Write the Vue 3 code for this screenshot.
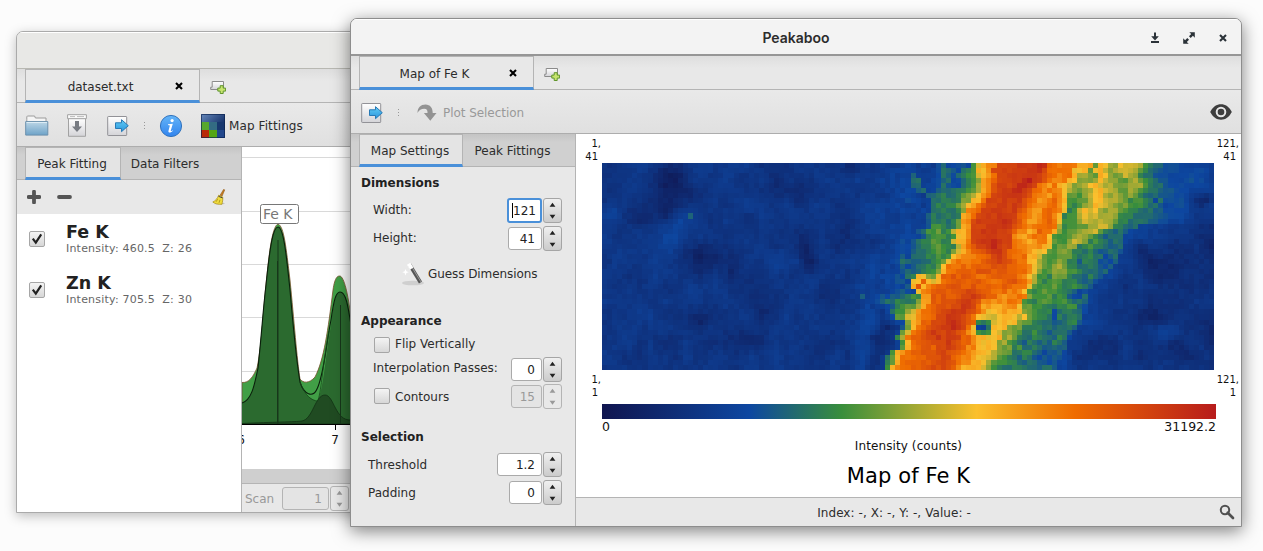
<script setup>
import { ref, onMounted } from 'vue'

const COLS = 121
const ROWS = 41

// Intensity profile of each row across the vein (a = 0, z = 1).
const vein = [
  'eeeeeeffefffgiggghgkoqsuwwxxxyyvutsttttqqrlqpnmpooonkjii',
  'eeeeeeefeeffgiihgijkqpsuwwxxxxywvttttttppqolpqomnooonljih',
  'eeeeeffiefffgihgijkkoqrtwxxxxyxwvutssttqpnnmlqpnmlmonmkjii',
  'eeeeeffiifffghiggijkmrsuwwxxyzxwvtsstqpnmmmnqommlkmnnlkji',
  'eeeefffiifffgihggijknrsvwwxyyxwvtsrttqpommnpqonnmlmnnkjii',
  'eeeefffghifghiiijjklnqsvwxxyyxwutstsspnmlmnpqonnmllnmkjiih',
  'eeeefffggfhiijiijlmnprtvwxwxxwvtssrtspllkmopqpnmnmlmljihih',
  'eeeeffgggfgiijjijmmqqtvwwxwwxvutrstusqkkllnpqonnmljkkjigi',
  'eeeefffggfgijijjlnqrtvwwxxwxwvtssstuspkjkmnqponmlmkkkjiih',
  'eeeeffffggiijiijmstuvwxxywwxvusrrtutspjjkoqopnmnnlkjjiiih',
  'eeeefffgghjiijijqrtwwxwxxxwwutsrstuusqjkknpoonnnmjjjiiiih',
  'eeeefffgghjijijlrswxwxxyyxwvtsrrstuttpkkkmonnonnljjiiiihg',
  'eeeefffgghkkjijlqrwwwxxxxxvutsstttustnjkkllnnoomjjihigggg',
  'eeeeefgghikkljkoqswwxxwwwwutssqrtuttqmkkllmnnoljihihggggf',
  'eeeeffgghjkkkjkpqsvwwxxwwvtsrqrstttspkkklmnmmljihiiiggggg',
  'eeeefgghijjlkjjoqtwxxyxwwutsrrqrsttqlkkkmonmjkkjihiifgggf',
  'eeefgghijjklkjjnrtvwxyxxwttsssrrrsqplkllnmmijkjjiihhigefe',
  'eeefgghiijklkjmoqsuvwxxwuttttsrqqppljkmmljjiijihhiihggeee',
  'effghgiiijjkjkprssttuwxwutttuuqqpolkkllljijjjiighigggeed',
  'eefgiihhiijklpstssttuvwxwvuttqrpnlklmmljjihjjijghghggfed',
  'eeffghghiijjlpttutuuuvvvuuuttspnlkkmnmljjihijighghgffedd',
  'eefgghihijjkmqttuuuvvvuvvuutuspmkklmmmkkjihiihigggfffeed',
  'feffghgijqpmlquuvuvvutuuvuuutspnkkjkmlljjiihjjihfgfffeedd',
  'feegghhgpuqoqtuuvuuuvutttuvutrnkjjkklkjjjjiihihgfeffeedde',
  'feeffgghqvqstuuvvvuuvuuutvuttpllkkkllkjjkjjihgggffgfeedd',
  'eefgghggpstuvuvvvwwvuuttusttspkjkkllkjkjjjiihgfghffeedddd',
  'efhghhijkjrvuvuvwwxwvuusrssttmkkkkkklkjjkjjihgggfigfeeddd',
  'efghiijjijmrvuvvvwxxwvssrsrttspkjjkllkjkkkjiihggffgggeedd',
  'eefghjkllnqtuvvvwwxxwvtqrqqrsspllkjkjjiijjkkihggfffggfedd',
  'eeefikkmorttuvwwwxxwvusppqrqqqmllkjjjjigijjjiihggffffeedd',
  'eeefgllopsttuvwwxxxwvtpoopqqpnpnlkkjjjiggjiijijihggffeedd',
  'eddefgmqruuvwwwxyxwvuspoopqpqnmllkjijiihghiijjihggfeedddd',
  'edcdehlqtuvwwwxxyxwvtsqrrqpqpmlmkjjijjiiihjiihihggfeeddd',
  'dddeeglotuvwxwwxwwvusqrqrqpommnlkjiijkiihhijiihhggfeddddd',
  'dccddejntuuvwwxwxxwuusqqppqnmnmljjiijkjihihijihgggfeedddd',
  'dcddefkqtuvvvwwwxwvuusrqpqpmmnkjjiihjiihhihjjiihggfeedddd',
  'dddeglqtuvvvuwwxwvuustqpqpmllmljkjiijiihghiihhgfgfedddddd',
  'ddekqrtuuvvvwwwvvutssrqqponmlljiijijihighhihgggffedddddd',
  'deilqtttuuvvwvwwutssqrpponklkjiihjiihghighhggffeeddddddd',
  'dejlqtuuuvuvwwvvutssqqppnlkkjjjihiiihhighgggffeedddddded',
  'dekqstttuuvvwwvwvutsqqqpqomkjjiijjiihihiihggffeeeddddded',
]

// Column where each row turns yellow, peaks, leaves yellow, and fades to blue.
const left = [75, 74, 75, 75, 75, 75, 74, 73, 72.5, 71.7, 71, 71, 71, 70.5, 70, 70.5, 71, 70.7, 69, 68, 67.3, 67, 62, 61.5, 61.5, 62, 63.5, 63.5, 63, 62.3, 61.3, 61, 61, 60.6, 60.3, 60, 60, 58.5, 58, 58, 57]
const peak = [84, 83.6, 83.3, 83, 82, 81, 80, 79.5, 79, 78.5, 78, 77.8, 77.5, 77.2, 77, 77.2, 77.4, 77.6, 78.2, 78.4, 77, 76, 74.5, 73.5, 72.5, 71.8, 71, 70.3, 69.7, 69, 68.5, 68, 67.5, 67, 66.7, 66.3, 66, 65.7, 65.5, 65.2, 65]
const right = [97, 96.3, 94.3, 93.5, 92.5, 92, 91.8, 91.7, 91.6, 91.5, 91.2, 91, 90.2, 89.6, 89, 88.6, 88.4, 87.6, 87, 86.3, 86, 85.6, 85.3, 85, 84.8, 84.3, 83.8, 83.4, 83, 82.7, 82.2, 81.6, 80.4, 79, 78.5, 78, 77.8, 77.4, 76.8, 76.3, 76]
const fade = [110.5, 110, 109, 110, 111, 111, 111, 110.6, 110.6, 110.5, 110.3, 109, 105.5, 103.5, 103, 102.7, 102.6, 102.5, 102, 101.5, 100.5, 100, 99, 97.3, 96.7, 96, 95.6, 95.4, 95.2, 95.2, 95, 95, 93.7, 93, 92.2, 92, 91.6, 91, 90.4, 90, 89.7]

const spots = {
  '17,10': 0.3, '51,26': 0.29, '61,2': 0.3, '61,3': 0.32,
  '74,31': 0.37, '75,31': 0.34, '76,31': 0.38,
  '74,32': 0.22, '75,32': 0.2, '76,32': 0.33,
  '74,33': 0.4, '75,33': 0.37, '76,33': 0.4, '73,32': 0.6,
}

const stops = [
  [0, 16, 21, 79], [0.24, 13, 71, 161], [0.39, 56, 142, 60],
  [0.61, 251, 192, 45], [0.77, 239, 108, 0], [1, 183, 28, 28],
]

// column, row, radius x, radius y, change in intensity
const blobs = [
  [13.5, 4, 3.5, 5, -0.09], [18.5, 18, 3, 2.6, -0.09], [27, 34, 3, 2.5, -0.07],
  [39.5, 17, 1.7, 3, -0.07], [41, 20, 1.5, 2, -0.06], [44, 25, 2, 3.5, -0.07],
  [34, 3, 1.5, 2.5, -0.06], [49, 0.5, 1.5, 1.5, -0.08], [56, 33, 2.5, 3, -0.08],
  [53.5, 15, 2, 2, -0.06], [12, 9, 1.5, 2, -0.06], [14, 35, 3, 1.5, -0.05],
  [19, 31, 1.5, 1.5, -0.07], [31, 29, 1.5, 1.8, -0.06], [54, 38, 2, 3, -0.07],
  [24, 16, 3, 6, -0.04], [47, 14, 3, 4, -0.04], [25, 22, 1, 2.5, -0.05],
  [30, 13, 2, 1.5, -0.05], [38.5, 5, 2, 3, -0.05], [8, 10, 3, 2, -0.05],
  [13, 15, 2, 4, 0.06], [15.5, 10, 2, 2, 0.05], [34, 20, 3, 3, 0.04],
  [51.5, 32, 2, 6, 0.06], [51, 38, 2, 3, 0.02], [55, 21, 2.5, 5, 0.06],
  [1.5, 9.5, 1.5, 1.5, 0.06], [57, 2, 3, 3, 0.03], [24, 3, 5, 6, 0.02],
  [9, 34, 0.7, 4, 0.03], [16, 36, 1, 2.5, 0.04], [37, 27, 2, 3, 0.02],
  [118.5, 7, 2.5, 1.2, -0.1], [106, 16.5, 2, 2, -0.07], [109, 20, 4, 4, -0.06], [110, 30, 3.5, 2, -0.06],
  [113, 37, 4, 2, -0.05], [120, 33, 2, 3, -0.05], [111, 33, 2, 1.6, 0.08],
  [114, 10, 1.5, 4, 0.04], [112, 3, 5, 4, 0.03], [118, 2, 4, 3, 0.04],
  [107, 14, 4, 1.5, 0.03], [119, 15, 2, 3, -0.04], [97, 36, 4, 3, -0.05],
]

function hash(x, y) {
  let h = Math.imul(x + 17, 374761393) ^ Math.imul(y + 31, 668265263)
  h = Math.imul(h ^ (h >>> 13), 1274126177)
  return ((h ^ (h >>> 16)) >>> 0) / 4294967295
}

function smooth(x, y) {
  const xi = Math.floor(x), yi = Math.floor(y)
  const fx = x - xi, fy = y - yi
  const top = hash(xi, yi) * (1 - fx) + hash(xi + 1, yi) * fx
  const low = hash(xi, yi + 1) * (1 - fx) + hash(xi + 1, yi + 1) * fx
  return top * (1 - fy) + low * fy
}

// Pairs of [column, profile index] that tie a row's profile to its columns.
const anchors = vein.map((s, r) => {
  const v = [...s].map(ch => ch.charCodeAt(0) - 97)
  const a = v.findIndex(n => n >= 15)
  const top = Math.max(...v)
  let sum = 0, weight = 0
  v.forEach((n, i) => { if (n >= top - 2) { sum += i; weight++ } })
  const m = sum / weight
  const b = v.findIndex((n, i) => i > m && n <= 13)
  let t = v.length - 1
  while (v[t] < 7) t--
  return [[left[r] - a, 0], [left[r], a], [peak[r], m], [right[r], b], [fade[r], t + 1]]
})

function background(c, r) {
  const fine = hash(c, r) - 0.5
  let v = 0.155 + (smooth(c / 2.4, r / 2.7) - 0.5) * 0.07 + fine * 0.035
  if (c > 60) v += r < 12 ? 0.02 : -0.015
  else if (c > 46) v += (c - 46) * 0.003
  for (const [bc, br, rx, ry, d] of blobs) {
    v += d * Math.exp(-(((c - bc) / rx) ** 2 + ((r - br) / ry) ** 2))
  }
  if (c >= fade[r] - 1) v += 0.07 * Math.exp(-(c - fade[r]) / 3.5)
  return Math.max(0.04, v)
}

function intensity(c, r) {
  const spot = spots[c + ',' + r]
  if (spot) return spot
  const ties = anchors[r]
  const base = background(c, r)
  if (c < ties[0][0] || c >= fade[r]) return base
  let k = 1
  while (k < ties.length - 1 && c > ties[k][0]) k++
  const [c0, i0] = ties[k - 1], [c1, i1] = ties[k]
  const i = Math.round(i0 + (i1 - i0) * (c - c0) / (c1 - c0))
  let v = (vein[r].charCodeAt(Math.min(i, vein[r].length - 1)) - 97) / 25
  // The upper part of the vein has a broad saturated core.
  if (r < 17 && c > left[r] + 2.5 && c < peak[r] + 3.5) v = Math.max(v, 0.89)
  return (v < 0.25 && c < 66 ? (v + base) / 2 + 0.01 : v) + (hash(c, r) - 0.5) * 0.03
}

function colour(v) {
  v = Math.min(1, Math.max(0, v))
  let i = 1
  while (i < stops.length - 1 && v > stops[i][0]) i++
  const a = stops[i - 1], b = stops[i]
  const t = (v - a[0]) / (b[0] - a[0])
  return [1, 2, 3].map(k => a[k] + (b[k] - a[k]) * t)
}

const map = ref(null)
onMounted(() => {
  const ctx = map.value.getContext('2d')
  const img = ctx.createImageData(COLS, ROWS)
  for (let r = 0; r < ROWS; r++) {
    for (let c = 0; c < COLS; c++) {
      img.data.set([...colour(intensity(c, r)), 255], (r * COLS + c) * 4)
    }
  }
  ctx.putImageData(img, 0, 0)
})

const fits = [
  { name: 'Fe K', info: 'Intensity: 460.5  Z: 26' },
  { name: 'Zn K', info: 'Intensity: 705.5  Z: 30' },
]
</script>

<template>
  <div class="desktop">
    <svg class="defs" width="0" height="0">
      <defs>
        <linearGradient id="paper" x2="0" y2="1"><stop offset="0" stop-color="#fff" /><stop offset="1" stop-color="#d4d4d8" /></linearGradient>
        <linearGradient id="blueArrow" x2="0" y2="1"><stop offset="0" stop-color="#62cdf6" /><stop offset="1" stop-color="#2b95dc" /></linearGradient>
        <linearGradient id="folder" x2="0" y2="1"><stop offset="0" stop-color="#bcd6e6" /><stop offset="1" stop-color="#6ea3c8" /></linearGradient>
        <linearGradient id="info" x2="0" y2="1"><stop offset="0" stop-color="#64b5f8" /><stop offset="1" stop-color="#3284ee" /></linearGradient>
        <linearGradient id="navy" x2="1" y2="1"><stop offset="0" stop-color="#6688bb" /><stop offset=".6" stop-color="#1d3a72" /><stop offset="1" stop-color="#0b1c46" /></linearGradient>
        <symbol id="newtab" viewBox="0 0 16 14">
          <path d="M2.2 1.5h11.3v8H.7V7.2h1.5z" fill="url(#paper)" stroke="#8b8b8b" />
          <path d="M10.2 5.7h3v2.4h2.4v3h-2.4v2.4h-3v-2.4H7.8v-3h2.4z" fill="#c7e46f" stroke="#5f942a" />
        </symbol>
        <symbol id="export" viewBox="0 0 22 22">
          <rect x=".7" y="1.5" width="19" height="19" rx=".6" fill="url(#paper)" stroke="#929297" />
          <path d="M8.5 7.8h6V4.7l6.8 6-6.8 6v-3.2h-6z" fill="url(#blueArrow)" stroke="#2779b5" />
        </symbol>
        <symbol id="close" viewBox="0 0 8 8"><path d="M1 1l6 6M7 1L1 7" stroke="currentColor" stroke-width="2.1" /></symbol>
        <symbol id="tick" viewBox="0 0 16 16"><path d="M3.8 7.7l3 3.9L12.2 3.4" fill="none" stroke="#222" stroke-width="2.2" /></symbol>
        <symbol id="arrows" viewBox="0 0 17 23"><path d="M5.6 7.8l2.9-4 2.9 4zM5.6 15.7l2.9 4 2.9-4z" fill="currentColor" /></symbol>
      </defs>
    </svg>

    <section class="window back">
      <header class="titlebar dim"></header>
      <div class="tabs main">
        <div class="tab active">dataset.txt<svg class="x"><use href="#close" /></svg></div>
        <svg class="new"><use href="#newtab" /></svg>
      </div>
      <div class="toolbar">
        <svg class="folder-ico" viewBox="0 0 24 22">
          <path d="M1.8 4.5V1.8l.6-.8h7.2l.8 2H21v4H1.8z" fill="#f5f5f5" stroke="#9c9c9c" />
          <path d="M.7 6.6h22.1v13.5H.7z" fill="url(#folder)" stroke="#6c91ad" /><path d="M1.5 7.5h20.5" stroke="#dcecf5" />
        </svg>
        <svg class="save-ico" viewBox="0 0 20 23">
          <path d="M1.5 4.5h17v17.8h-17z" fill="url(#paper)" stroke="#a2a2a2" /><path d="M.6.7h18.8v4H.6z" fill="#fafafa" stroke="#a2a2a2" /><path d="M3 2.6h5M10 2.6h7" stroke="#bbb" />
          <path d="M8 7h4v5.4h3L10 18l-5-5.6h3z" fill="#777b82" />
        </svg>
        <svg class="export-ico"><use href="#export" /></svg>
        <i class="grip"></i>
        <svg class="info-ico" viewBox="0 0 24 24"><circle cx="12" cy="12" r="10.6" fill="url(#info)" stroke="#3273bd" />
          <circle cx="13.1" cy="6.6" r="1.6" fill="#fff" /><path d="M9 10.2l4.8-.4-2 6.7c-.2 1 .6.7 1.8-.3l.3.5c-1.9 2.1-5.1 2.6-4.4 0l1.4-5.3-1.9-.4z" fill="#fff" /></svg>
        <svg class="map-ico" viewBox="0 0 24 24">
          <path d="M0 0h24v24H0z" fill="url(#navy)" /><path d="M0 8h8v8H0z" fill="#57a72c" /><path d="M8 8h8v8H8z" fill="#336b83" /><path d="M16 8h8v8h-8z" fill="#17376e" />
          <path d="M0 16h8v8H0z" fill="#b92907" /><path d="M8 16h8v8H8z" fill="#54a514" /><path d="M16 16h8v8h-8z" fill="#22478c" /><path d="M.5.5h23v23H.5z" fill="none" stroke="#09204c" stroke-opacity=".65" />
        </svg>
        <span class="wide">Map Fittings</span>
      </div>
      <div class="back-body">
        <aside class="fitlist">
          <div class="tabs side"><div class="tab active pf">Peak Fitting</div><div class="tab df">Data Filters</div></div>
          <div class="actions">
            <svg class="plus" viewBox="0 0 14 14"><path d="M7 1.6v10.8M1.6 7h10.8" stroke="#555" stroke-width="3.8" stroke-linecap="round" /></svg>
            <svg class="minus" viewBox="0 0 15 14"><path d="M2 7h11" stroke="#555" stroke-width="3.8" stroke-linecap="round" /></svg>
            <svg class="broom" viewBox="0 0 14 16">
              <path d="M2 15.4l11-.5-1.5-1.2z" fill="#999" opacity=".5" /><path d="M11.7.3l1 .6-2.6 6.2-2-.9z" fill="#c97b1c" stroke="#8d581a" stroke-width=".6" />
              <path d="M6.7 6.2l4 1.8c.3 2.8-.3 5-.7 7.3-3.4.2-7.3-.4-9.2-2.3 2.8-1.2 4.7-3.7 5.9-6.8z" fill="#f0dc3d" stroke="#a78b12" stroke-width=".7" /><path d="M4 12.8l1.7-2.7M7 13.8l1-3" stroke="#a58b17" stroke-width=".8" />
              <path d="M6.5 7.3l4 1.6" stroke="#444" />
            </svg>
          </div>
          <div v-for="f in fits" :key="f.name" class="fit">
            <span class="check"><svg><use href="#tick" /></svg></span>
            <div><b>{{ f.name }}</b><small>{{ f.info }}</small></div>
          </div>
        </aside>
        <div class="spectrum">
          <svg class="chart" width="109" height="322" viewBox="242 147 109 322">
            <path d="M242 157.5h109M242 211.5h109M242 264.5h109M242 317.5h109M242 371.5h109" stroke="#d9d9d9" />
            <path d="M242 382.5C249 383 253 377 257 368C262 345 263 310 267 275C270 245 273 226 278 224C284 226 286 247 290 280C294 320 297 360 300 379C303 383 309 384 315 377C324 360 328 330 333 290C335 276 338 276 340 276C344 277 348 293 351 318V424H242z" fill="#419f46" stroke="#78502d" stroke-width=".8" />
            <path d="M242 403C251 400 254 388 258 368C262 330 263 310 266 285C270 246 273 227 278 227C284 227 287 262 290 290C293 325 296 358 300 382C305 396 312 400 318 401C324 384 325 360 331 325C334 300 336 292 340 292C346 292 348 306 351 325V424H242z" fill="#2b6a2f" />
            <path d="M242 403C251 400 254 388 258 368C262 330 263 310 266 285C270 246 273 227 278 227C284 227 287 262 290 290C293 325 296 358 300 382C304 395 313 398 317 389C324 375 326 345 331 320C334 299 336 292 340 292C346 292 348 306 351 325" fill="none" stroke="#0b1f0c" stroke-width="1.1" />
            <path d="M300 382C305 396 312 401 318 401C322 386 322 370 329 331" fill="none" stroke="#174a1a" stroke-width=".8" />
            <path d="M242 423.5C273 422 295 422 302 421C313 419 315 395 325 395C334 395 335 421 351 420V424H242z" fill="#204b22" stroke="#143516" stroke-width=".9" />
            <path d="M278 240v184M340.5 305v119" stroke="#17361a" /><path d="M277.5 261v163" stroke="#17361a" />
            <path d="M242 424.5h109" stroke="#000" /><path d="M335.5 425v5" stroke="#000" />
            <text x="335" y="444" text-anchor="middle">7</text><text x="241" y="444" text-anchor="middle">6</text>
            <rect x="260.5" y="204.5" width="38" height="19" rx="2" fill="#fff" stroke="#777" /><text class="tag" x="263" y="219">Fe K</text>
          </svg>
          <div class="scroll"></div>
          <div class="scan"><span class="down">Scan</span><div class="spin off"><div class="field w47">1</div><svg class="step"><use href="#arrows" /></svg></div></div>
        </div>
      </div>
    </section>

    <section class="window front">
      <header class="titlebar"><span class="grow"></span><b>Peakaboo</b>
        <span class="grow winbtns">
          <svg viewBox="0 0 10 11"><path d="M5 .5v6M1 9.9h8" stroke="#2b3238" stroke-width="2" /><path d="M1.2 4.3h7.6L5 8.6z" fill="#2b3238" /></svg>
          <svg class="max" viewBox="0 0 12 12"><path d="M6.3.2h5.5v5.5L9.9 3.8 7.7 6 6 4.3l2.2-2.2zM5.7 11.8H.2V6.3l1.9 1.9L4.3 6 6 7.7 3.8 9.9z" fill="#2b3238" /></svg>
          <svg class="cls"><use href="#close" /></svg>
        </span>
      </header>
      <div class="tabs main">
        <div class="tab active">Map of Fe K<svg class="x"><use href="#close" /></svg></div>
        <svg class="new"><use href="#newtab" /></svg>
      </div>
      <div class="toolbar">
        <svg class="export-ico first"><use href="#export" /></svg>
        <i class="grip"></i>
        <svg class="plot-ico" viewBox="0 0 20 17"><path d="M.6 9C.2 3.5 4 .4 8.500.4c4.7 0 7.2 3.5 7.2 8.5h3.8l-6.2 7.8-6.4-7.8h3.6c.2-3-.8-4.2-3.3-4.2C4.3 4.7 2 6 .6 9z" fill="#939393" /></svg>
        <span class="disabled">Plot Selection</span>
        <svg class="eye" viewBox="0 0 22 16"><path d="M.2 8C3 2.7 6.6.3 11 .3S19 2.7 21.8 8C19 13.3 15.4 15.7 11 15.7S3 13.3.2 8z" fill="#3e3e3e" /><circle cx="11" cy="8" r="4.3" fill="none" stroke="#e6e6e6" stroke-width="2" /></svg>
      </div>
      <div class="front-body">
        <aside class="settings">
          <div class="tabs side"><div class="tab active ms">Map Settings</div><div class="tab pk">Peak Fittings</div></div>
          <div class="form">
            <h4 class="h27">Dimensions</h4>
            <div class="line in1"><span>Width:</span><div class="spin"><div class="field w35 focus">121</div><svg class="step"><use href="#arrows" /></svg></div></div>
            <div class="line in1"><span>Height:</span><div class="spin"><div class="field w34">41</div><svg class="step"><use href="#arrows" /></svg></div></div>
            <div class="guess">
              <svg viewBox="0 0 23 24"><ellipse cx="12" cy="21" rx="11" ry="2.3" fill="#aaa" opacity=".4" /><path d="M8.5 2.5L19.5 20.5" stroke="#555" stroke-width="3.6" /><path d="M9.1 2.2L20 20" stroke="#999" stroke-width="1" /><path d="M7.7 1.8l3 4.8" stroke="#fff" stroke-width="4" /><path d="M4.5 7l.9 2.3 2.3.9-2.3.9-.9 2.3-.9-2.3-2.3-.9 2.3-.9z" fill="#fff" /></svg>
              <span>Guess Dimensions</span>
            </div>
            <h4 class="h24 gap14">Appearance</h4>
            <div class="line h23 in2"><span class="check"></span><span>Flip Vertically</span></div>
            <div class="line h26 in1"><span class="up">Interpolation Passes:</span><div class="spin"><div class="field w31">0</div><svg class="step"><use href="#arrows" /></svg></div></div>
            <div class="line in2"><span class="check"></span><span class="down">Contours</span><div class="spin off"><div class="field w31">15</div><svg class="step"><use href="#arrows" /></svg></div></div>
            <h4 class="h24 gap15">Selection</h4>
            <div class="line in0 gap1"><span class="down">Threshold</span><div class="spin"><div class="field w45">1.2</div><svg class="step"><use href="#arrows" /></svg></div></div>
            <div class="line in0"><span class="down">Padding</span><div class="spin"><div class="field w33">0</div><svg class="step"><use href="#arrows" /></svg></div></div>
          </div>
        </aside>
        <main class="view">
          <div class="corners top"><span>1,<br><em>41</em></span><span>121,<br><em>41</em></span></div>
          <canvas ref="map" class="heat" width="121" height="41"></canvas>
          <div class="corners low"><span>1,<br><em>1</em></span><span>121,<br><em>1</em></span></div>
          <div class="scale"></div>
          <div class="range"><span>0</span><span>31192.2</span></div>
          <div class="axis">Intensity (counts)</div>
          <div class="caption">Map of Fe K</div>
          <footer><span>Index: -, X: -, Y: -, Value: -</span>
            <svg viewBox="0 0 16 16"><circle cx="6" cy="6" r="4.2" fill="none" stroke="#505050" stroke-width="2" /><path d="M8.7 8.7l5.3 5.3" stroke="#505050" stroke-width="2.7" stroke-linecap="round" /></svg>
          </footer>
        </main>
      </div>
    </section>
  </div>
</template>

<style>
html, body { overflow: hidden; background: #fcfcfc; }
</style>

<style scoped>
.desktop { position: relative; width: 1263px; height: 551px; background: #fcfcfc; overflow: hidden; font: 12px/15px "DejaVu Sans", sans-serif; color: #2c2c2c; }
.desktop * { box-sizing: border-box; }
.defs { position: absolute; }
svg { display: block; flex: none; }
.window { position: absolute; display: flex; flex-direction: column; border: 1px solid #999; border-radius: 7px 7px 0 0; overflow: hidden; background: #e8e8e8; }
.back { left: 16px; top: 31px; width: 600px; height: 482px; border-color: #aaa; box-shadow: 0 3px 12px rgba(0,0,0,.25); }
.front { left: 350px; top: 18px; width: 892px; height: 509px; border-color: #8d8d8d; box-shadow: 0 4px 17px rgba(0,0,0,.5); }
.titlebar { height: 37px; display: flex; align-items: center; background: #f3f3f3; border-bottom: 2px solid #969696; font: 600 14px/20px Inter, sans-serif; box-shadow: inset 0 1px #fff; flex: none; padding-top: 2px; }
.titlebar b { font-weight: 600; }
.titlebar.dim { background: #e8e8e6; border-bottom: 1px solid #b8b8b2; }
.grow { flex: 1 1 0; width: 0; padding-left: 14px; }
.winbtns { display: flex; justify-content: flex-end; align-items: center; padding: 0 14px 0 0; color: #2b3238; }
.winbtns svg { width: 10px; height: 11px; }
.winbtns .max { width: 12px; height: 12px; margin: 0 24px 0 23px; }
.winbtns .cls { width: 8px; height: 8px; }
.tabs { display: flex; border-bottom: 1px solid #b4b4b4; flex: none; }
.main { height: 34px; padding-left: 8px; background: linear-gradient(#dedede, #e8e8e8 12px); }
.main .tab { width: 175px; padding: 5px 24px 0 0; }
.tab { display: flex; justify-content: center; align-items: center; position: relative; }
.tab.active { border: 1px solid #b4b4b4; border-bottom: 3px solid #4a90d9; background: #e8e8e8; margin-bottom: -1px; }
.tab .x { position: absolute; right: 16px; top: 12px; width: 8px; height: 8px; color: #000; }
.new { width: 16px; height: 14px; margin: 11px 0 0 10px; }
.toolbar { height: 44px; display: flex; align-items: center; background: linear-gradient(#e9e9e9, #e0e0e0); border-bottom: 1px solid #adadad; flex: none; padding-top: 2px; }
.toolbar span { padding-top: 1px; }
.folder-ico { width: 24px; height: 22px; margin-left: 8px; }
.save-ico { width: 20px; height: 23px; margin-left: 18px; }
.export-ico { width: 22px; height: 22px; margin-left: 20px; }
.export-ico.first { margin-left: 10px; }
.grip { width: 1px; height: 8px; margin-left: 15px; background: repeating-linear-gradient(#999 0 1px, transparent 1px 3px); }
.info-ico { width: 24px; height: 24px; margin-left: 14px; }
.map-ico { width: 24px; height: 24px; margin: 0 4px 0 18px; }
.wide { letter-spacing: .1px; }
.plot-ico { width: 20px; height: 17px; margin: 0 6px 0 18px; }
.disabled { color: #999; letter-spacing: -.05px; }
.eye { width: 22px; height: 16px; margin: -2px 9px 0 auto; }
.back-body { display: flex; flex: 1; min-height: 0; }
.fitlist { width: 225px; background: #fff; border-right: 1px solid #b4b4b4; flex: none; }
.side { height: 33px; background: linear-gradient(#c4c4c4, #d0d0d0 8px); padding-left: 8px; }
.pf { width: 96px; } .df { width: 88px; padding-top: 2px; }
.side .tab.active { background: #e4e4e4; padding: 3px 2px 0 0; }
.actions { height: 34px; display: flex; align-items: center; background: #e8e8e8; padding-left: 10px; }
.plus { width: 14px; height: 14px; } .minus { width: 15px; height: 14px; margin-left: 16px; } .broom { width: 14px; height: 16px; margin-left: auto; margin-right: 15px; }
.fit { height: 51px; display: flex; align-items: center; padding-left: 12px; white-space: pre; position: relative; top: -1px; }
.fit b { display: block; font-size: 17.5px; line-height: 20px; color: #222; }
.fit small { display: block; font-size: 11px; line-height: 14px; color: #666; letter-spacing: .2px; }
.fit > div { margin-left: 21px; padding-top: 1px; }
.check { width: 16px; height: 16px; border: 1px solid #a6a6a6; border-radius: 2px; background: linear-gradient(#f4f4f4, #d7d7d7); flex: none; }
.check svg { width: 16px; height: 16px; margin: -1px; }
.spectrum { width: 109px; background: #fff; }
.chart text { font: 12px "DejaVu Sans", sans-serif; fill: #111; } .chart .tag { font-size: 14px; fill: #777; }
.scroll { height: 15px; background: #cfcfcf; border-bottom: 1px solid #b4b4b4; }
.scan { height: 29px; display: flex; align-items: center; background: #e8e8e8; padding-left: 3px; color: #999; justify-content: space-between; padding-right: 2px; }
.front-body { display: flex; flex: 1; min-height: 0; }
.settings { width: 225px; border-right: 1px solid #b4b4b4; flex: none; }
.ms { width: 104px; } .pk { width: 99px; padding-top: 2px; }
.form { padding: 2px 13px 0 10px; }
h4 { margin: 0; font-size: 12px; font-weight: 700; display: flex; align-items: center; color: #222; }
.h27 { height: 27px; padding-top: 2px; } .h24 { height: 24px; }
.line { height: 28px; display: flex; align-items: center; }
.line.h23 { height: 23px; } .line.h26 { height: 26px; }
.up { margin-top: -2px; } .down { padding-top: 2px; }
.gap14 { margin-top: 14px; } .gap15 { margin-top: 15px; } .gap1 { margin-top: 1px; }
.in1 { padding-left: 12px; } .in2 { padding-left: 13px; } .in0 { padding-left: 7px; }
.line .check { margin-right: 5px; }
.spin { display: flex; align-items: center; margin-left: auto; gap: 1px; }
.field { height: 23px; border: 1px solid #aaa; border-radius: 3px; background: #fff; text-align: right; padding: 4px 6px 0 0; color: #222; }
.focus { height: 25px; border: 2px solid #4a90d9; padding-right: 4px; position: relative; }
.focus::before { content: ""; position: absolute; left: 3px; top: 3px; width: 1px; height: 15px; background: #000; }
.step { width: 19px; height: 25px; border: 1px solid #a5a5a5; border-radius: 3px; background: linear-gradient(#f0f0f0, #cbcbcb); color: #222; }
.off .field { background: #e4e4e4; color: #999; border-color: #b4b4b4; }
.off .step { background: #e8e8e8; color: #999; border-color: #b4b4b4; }
.w47 { width: 47px; } .w35 { width: 35px; } .w34 { width: 34px; } .w31 { width: 31px; } .w45 { width: 45px; } .w33 { width: 33px; }
.guess { height: 43px; display: flex; align-items: center; padding-left: 40px; gap: 4px; }
.guess svg { width: 23px; height: 24px; }
.guess span { padding-top: 1px; letter-spacing: -.08px; }
.view { flex: 1; background: #fff; display: flex; flex-direction: column; color: #111; }
.corners { display: flex; justify-content: space-between; font-size: 10px; line-height: 13px; padding: 3px 2px 0 0; text-align: right; flex: none; }
.corners span:first-child { width: 25px; }
.corners em { font-style: normal; padding-right: 3px; }
.top { height: 29px; } .low { height: 34px; }
.heat { width: 612px; height: 207px; margin-left: 26px; image-rendering: pixelated; display: block; flex: none; }
.scale { height: 15px; width: 614px; margin-left: 26px; background: linear-gradient(90deg, #10154f, #0d47a1 24%, #388e3c 39%, #fbc02d 61%, #ef6c00 77%, #b71c1c); flex: none; }
.range { display: flex; justify-content: space-between; width: 614px; margin-left: 26px; height: 20px; font-size: 12.5px; }
.axis { text-align: center; height: 16px; letter-spacing: .1px; }
.caption { text-align: center; font-size: 21px; line-height: 26px; padding-top: 8px; letter-spacing: .1px; color: #000; }
footer { margin-top: auto; height: 29px; background: #e8e8e8; border-top: 1px solid #b4b4b4; display: flex; align-items: center; color: #2c2c2c; }
footer span { flex: 1; text-align: center; padding: 2px 7px 0 0; letter-spacing: .07px; } footer svg { width: 16px; height: 16px; margin-right: 6px; }
</style>
